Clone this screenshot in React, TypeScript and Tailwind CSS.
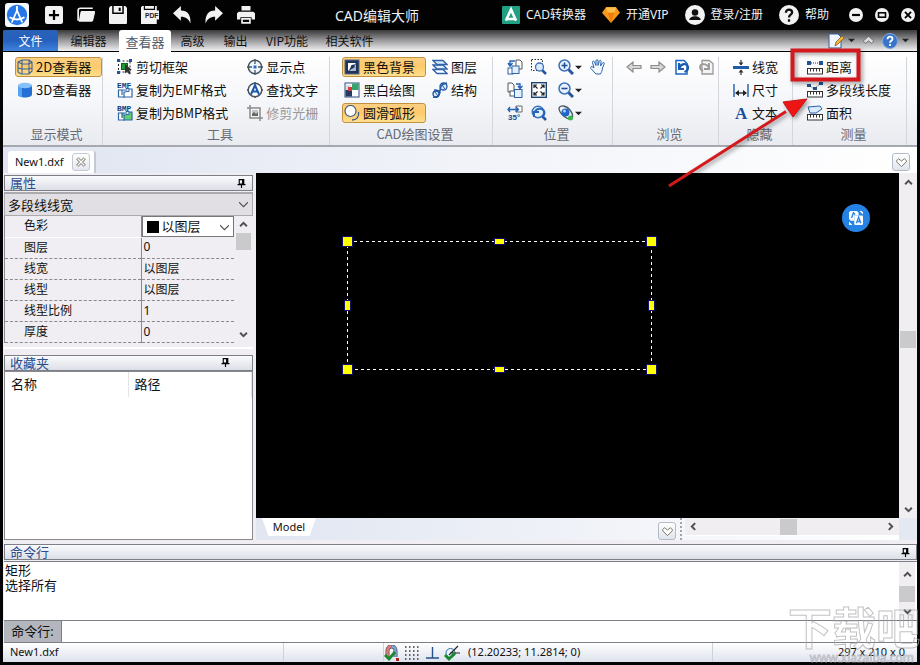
import type { ReactNode } from "react";

type IconProps = { children: ReactNode; className?: string };

function Icon({ children, className = "size-4" }: IconProps) {
    return (
        <svg viewBox="0 0 16 16" fill="none" className={`shrink-0 ${className}`} aria-hidden="true">
            {children}
        </svg>
    );
}

/* ---------- shared icon pieces ---------- */

function Ruler() {
    return (
        <>
            <rect x="0.5" y="9.5" width="15" height="5.5" fill="#fff" stroke="#333" />
            <path d="M3.5 10v2.5M6.5 10v2.5M9.5 10v2.5M12.5 10v2.5" stroke="#333" />
        </>
    );
}

function Lens({ sign }: { sign: ReactNode }) {
    return (
        <Icon>
            <path d="M10.5 10.5l4.5 4.5" stroke="#27549c" strokeWidth="3" />
            <circle cx="6.5" cy="6.5" r="5.5" fill="#e9f3ff" stroke="#3c72b8" strokeWidth="1.5" />
            {sign}
        </Icon>
    );
}

function PageStack({ label, fill }: { label: string; fill: string }) {
    return (
        <Icon>
            <path d="M5 8H1.500v7H8" fill="#fff" stroke="#3166a5" strokeWidth="1.200" />
            <path d="M5 13V8h3M12 7h3v8H7V10h2" fill={fill} stroke="#3166a5" strokeWidth="1.200" />
            <path d="M9 6.500h3v3H9z" fill="#dcebfc" stroke="#3166a5" />
            <text x="0" y="5.500" fontSize="8" fontWeight="700" fill="#173f7c" fontFamily="Liberation Mono">{label}</text>
        </Icon>
    );
}

function Chevron({ dir, className = "size-[9px]" }: { dir: "up" | "down" | "left" | "right"; className?: string }) {
    const paths = {
        up: "M2 11l6-6 6 6",
        down: "M2 5l6 6 6-6",
        left: "M11 2L5 8l6 6",
        right: "M5 2l6 6-6 6",
    };
    return (
        <Icon className={className}>
            <path d={paths[dir]} stroke="#505050" strokeWidth="3.5" />
        </Icon>
    );
}

function SelectArrow() {
    return (
        <Icon className="pointer-events-none absolute top-1.5 right-1 size-[9px]">
            <path d="M0 4l8 8 8-8" stroke="#505050" strokeWidth="2" />
        </Icon>
    );
}

function Caret() {
    return (
        <Icon className="size-[7px]">
            <path d="M0 4h16l-8 8z" fill="#222" />
        </Icon>
    );
}

const icons = {
    cube: (
        <Icon>
            <path d="M1 3l4-2h7l3 2v9l-3 3H4l-3-2zM1 3l4 2h7l3-2M5 5v10M12 1v14M5 1v4M1 9l4 1h7l3-1" stroke="#3d6596" strokeWidth="1.1" />
        </Icon>
    ),
    cylinder: (
        <Icon>
            <path d="M1 3.500v9c0 4 14 4 14 0v-9z" fill="#236fd4" />
            <path d="M1 3.500v9c0 1.600 2 2.400 4 2.800V5z" fill="#57a1f2" />
            <ellipse cx="8" cy="3.500" rx="7" ry="2.800" fill="#87c1fb" />
        </Icon>
    ),
    cutFrame: (
        <Icon>
            <rect x="1.500" y="2" width="11.500" height="11" stroke="#222" strokeDasharray="2 2" />
            <path d="M0 0h3v3H0zM12 0h3v3h-3zM0 12h3v3H0z" fill="#1c55a2" />
            <rect x="4.500" y="4.500" width="6" height="6" fill="#1d9a35" stroke="#0d6620" />
            <path d="M8 5l7 6-3 .3 2 3-2 1.200-1.600-3L8 14.500z" fill="#333" />
        </Icon>
    ),
    emf: <PageStack label="EMF" fill="#fff" />,
    bmp: <PageStack label="BMP" fill="#5fcf72" />,
    target: (
        <Icon>
            <circle cx="8" cy="8" r="6.700" fill="#f2f8ff" stroke="#46545f" strokeWidth="1.500" />
            <path d="M8 0v5M8 11v5M0 8h5M11 8h5" stroke="#46545f" strokeWidth="1.300" />
            <rect x="6.500" y="6.500" width="3" height="3" fill="#2c6ac4" />
        </Icon>
    ),
    findText: (
        <Icon>
            <circle cx="8" cy="8" r="6.800" fill="#fff" stroke="#46545f" strokeWidth="1.500" />
            <path d="M0 8h2M14 8h2M8 0v2M8 14v2" stroke="#46545f" strokeWidth="1.500" />
            <path d="M4 12.500L8 3l4 9.500M5.500 9.500h5" stroke="#1d58aa" strokeWidth="2" />
        </Icon>
    ),
    cropRaster: (
        <Icon>
            <path d="M3 0v13h13M0 3h13v13" stroke="#8a8a8a" strokeWidth="1.500" />
            <path d="M5 5h6v6H5z" fill="#c4c4c4" />
            <path d="M5 9l2-2 2 2 2-2v4H5z" fill="#666" />
        </Icon>
    ),
    blackBg: (
        <Icon>
            <rect x="1" y="1" width="14" height="14" fill="#20345a" stroke="#54698c" />
            <path d="M4 4h8l-8 8z" fill="#fff" />
            <path d="M12 5v7H5z" fill="#a9b8cc" />
            <path d="M10.500 5.500v3l-5 2.500 2-5z" fill="#20345a" />
        </Icon>
    ),
    monoDraw: (
        <Icon>
            <rect x="1" y="1" width="14" height="14" fill="#fff" stroke="#2f4f80" />
            <path d="M8 1.500h6.500V8H8z" fill="#35a46b" />
            <path d="M1.500 8H8v6.500H1.500z" fill="#253a61" />
            <path d="M2 3h5v5H2z" fill="#d6dde8" />
            <path d="M4 5h4v4H4z" fill="#db3a3a" />
        </Icon>
    ),
    smoothArc: (
        <Icon>
            <circle cx="6.500" cy="6" r="5.500" fill="#fff" stroke="#3f5d86" strokeWidth="1.200" />
            <path d="M14.500 7c1 5-2 8-6.500 8" stroke="#3f5d86" strokeWidth="1.300" />
        </Icon>
    ),
    layers: (
        <Icon>
            <path d="M1 10.500h10l4 4H5z" fill="#fff" stroke="#2f62a6" strokeWidth="1.400" />
            <path d="M1 6h10l4 4H5z" fill="#dcebfc" stroke="#2f62a6" strokeWidth="1.400" />
            <path d="M1 1.500h10l4 4H5z" fill="#dcebfc" stroke="#2f62a6" strokeWidth="1.400" />
        </Icon>
    ),
    structure: (
        <Icon>
            <circle cx="4" cy="12" r="3" fill="#dcebfc" stroke="#1f57a5" strokeWidth="1.300" />
            <circle cx="11.500" cy="4.500" r="3.500" fill="#dcebfc" stroke="#1f57a5" strokeWidth="1.300" />
            <path d="M1 15c5 1 7-2 7-6s1-7 7-8M2 8c3 0 6 1 6 3" stroke="#1f57a5" strokeWidth="1.500" />
            <path d="M3 10l3 4M10 3l3 4" stroke="#1f57a5" />
        </Icon>
    ),
    copyLeft: (
        <Icon>
            <path d="M9 1h4l2 2v7H9z" fill="#fff" stroke="#555" />
            <rect x="1" y="9" width="5" height="6" fill="#fff" stroke="#2f62a6" />
            <rect x="5" y="7" width="7" height="7.500" fill="#e3f0ff" stroke="#2f62a6" />
            <path d="M8 2H3v4M1 4l2 3 2.500-3" stroke="#2263b4" strokeWidth="1.400" />
        </Icon>
    ),
    copyRight: (
        <Icon>
            <path d="M1 1h4l2 2v7H1z" fill="#fff" stroke="#555" />
            <rect x="3" y="9" width="5" height="5" fill="#fff" stroke="#555" />
            <rect x="7.500" y="7.500" width="7.500" height="8" fill="#e3f0ff" stroke="#2f62a6" />
            <path d="M9 2h4v4M11 4l2 2.500L15.500 4" stroke="#2263b4" strokeWidth="1.400" />
        </Icon>
    ),
    rotate35: (
        <Icon>
            <path d="M9 1h6v6H9z" fill="#fff" stroke="#666" />
            <path d="M3 2L1 4.500 3 7M1 4.500h10M9 2l2.500 2.500L9 7" stroke="#2263b4" strokeWidth="1.300" />
            <text x="1" y="15" fontSize="8" fontWeight="700" fill="#1d4b8f" fontFamily="Liberation Sans">35°</text>
        </Icon>
    ),
    zoomWindow: (
        <Icon>
            <rect x="0.500" y="0.500" width="11" height="11" stroke="#222" strokeDasharray="1.500 1.500" />
            <path d="M11 11l4 4" stroke="#27549c" strokeWidth="2.500" />
            <circle cx="8.500" cy="8" r="4" fill="#d9ebff" stroke="#3c72b8" strokeWidth="1.300" />
        </Icon>
    ),
    fit: (
        <Icon>
            <rect x="0.700" y="0.700" width="14.600" height="14.600" fill="#fff" stroke="#1d4576" strokeWidth="1.400" />
            <path d="M3 6V3h3M10 3h3v3M13 10v3h-3M6 13H3v-3M3 3l3.500 3.500M13 3L9.500 6.500M13 13L9.500 9.500M3 13l3.500-3.500" stroke="#222" strokeWidth="1.200" />
        </Icon>
    ),
    zoomPrev: (
        <Icon>
            <path d="M11 11l4 4" stroke="#27549c" strokeWidth="2.500" />
            <circle cx="7" cy="7" r="5.800" fill="#e2f0ff" stroke="#3c72b8" strokeWidth="1.400" />
            <path d="M3 12V7h5M3.500 7.500C6 2 13 3 13.500 8c0 2-1 3-2 4" stroke="#2367be" strokeWidth="2" />
        </Icon>
    ),
    zoomIn: <Lens sign={<path d="M3.500 6.500h6M6.500 3.500v6" stroke="#1d4d91" strokeWidth="1.600" />} />,
    zoomOut: <Lens sign={<path d="M3.500 6.500h6" stroke="#1d4d91" strokeWidth="1.600" />} />,
    orbit: (
        <Icon>
            <path d="M1 3c1-3 7-3 11 2s3 9 0 9S1 9 1 3z" fill="#eef3f7" stroke="#4b5862" strokeWidth="1.300" />
            <circle cx="7.500" cy="7.500" r="4" fill="#1f66c8" />
            <circle cx="6.500" cy="6" r="1.500" fill="#a9d0ff" />
            <circle cx="12.500" cy="13" r="2.500" fill="#39b54a" />
        </Icon>
    ),
    hand: (
        <Icon>
            <path d="M5 14L1 9.500C-.2 8 1.500 6.800 2.800 8L4 9 2.500 3.500c-.3-1.600 1.500-2 2-.5L6 6.500V1.800c0-1.500 2-1.500 2 0V6.500l1.300-4.300c.4-1.400 2-1 1.800.4L10.500 7l2-3c.8-1.200 2.300-.4 1.700.9L12.500 9c-.3 3-1 4-2 6H6z" fill="#f4faff" stroke="#2b64ad" strokeWidth="1" />
        </Icon>
    ),
    back: (
        <Icon>
            <path d="M1 8l6-5v3.500h8v3H7V13z" fill="#d8d8d8" stroke="#8c8c8c" strokeWidth="1.200" />
        </Icon>
    ),
    forward: (
        <Icon>
            <path d="M15 8L9 3v3.500H1v3h8V13z" fill="#d8d8d8" stroke="#8c8c8c" strokeWidth="1.200" />
        </Icon>
    ),
    viewUndo: (
        <Icon>
            <path d="M2 1.500h8l3 3V15H2z" fill="#fff" stroke="#1c66c4" strokeWidth="1.500" />
            <path d="M5 4v6h5M5.500 9.500C6 5 13 3 14 8c.3 2-1 4-3.500 5" stroke="#1c5cb0" strokeWidth="2.200" />
        </Icon>
    ),
    viewRedo: (
        <Icon>
            <path d="M4 1.500h7l4 3V15H4z" fill="#f4f4f4" stroke="#999" strokeWidth="1.300" />
            <path d="M11 4v6H6M11 9C9 4 2 4 2 8c0 2 1 3 3 4" stroke="#999" strokeWidth="1.800" />
        </Icon>
    ),
    lineWeight: (
        <Icon>
            <path d="M0 7h16v3H0z" fill="#1f5da9" />
            <path d="M8 1v5M8 16v-5" stroke="#333" strokeWidth="1.200" />
            <path d="M5.500 3.500h5L8 6.500zM5.500 13.500h5L8 10.500z" fill="#333" />
        </Icon>
    ),
    dimension: (
        <Icon>
            <path d="M1 2v13M15 2v13" stroke="#1f5da9" strokeWidth="1.400" />
            <path d="M3 11h10" stroke="#222" strokeWidth="1.300" />
            <path d="M2 11l4-3v6zM14 11l-4-3v6z" fill="#222" />
        </Icon>
    ),
    text: (
        <Icon>
            <text x="2" y="14" fontSize="17" fontWeight="700" fill="#174f9c" fontFamily="Liberation Serif">A</text>
        </Icon>
    ),
    distance: (
        <Icon>
            <path d="M0 2h4v4H0zM12 2h4v4h-4z" fill="#1f5494" />
            <path d="M4 4h8" stroke="#333" strokeDasharray="1 1" />
            <Ruler />
        </Icon>
    ),
    polyLength: (
        <Icon>
            <path d="M0 2h4v3H0zM6 5h4v3H6zM12 0h4v3h-4z" fill="#1f5494" />
            <path d="M3 4l4 3 6-5" stroke="#333" strokeDasharray="1 1" />
            <Ruler />
        </Icon>
    ),
    area: (
        <Icon>
            <path d="M1 2l12-1 2 3-6 4H3z" fill="#d7eafe" stroke="#2f62a6" />
            <Ruler />
        </Icon>
    ),
};

/* ---------- ribbon ---------- */

type RibbonButtonProps = { icon: ReactNode; label: string; active?: boolean; disabled?: boolean };

function RibbonButton({ icon, label, active, disabled }: RibbonButtonProps) {
    return (
        <button
            disabled={disabled}
            className={`flex h-5 items-center gap-[3px] rounded-[3px] border px-px pr-2.5 text-[13px] leading-[18px] whitespace-nowrap ${
                active
                    ? "border-[#c2913f] bg-linear-to-b from-[#fbd083] via-[#fdca6a] to-[#ffdf8e]"
                    : "border-transparent"
            } ${disabled ? "text-[#989898]" : "text-[#111]"}`}
        >
            {icon}
            {label}
        </button>
    );
}

function IconButton({ icon, label, menu }: { icon: ReactNode; label: string; menu?: boolean }) {
    return (
        <button aria-label={label} className="flex h-5 items-center gap-px">
            {icon}
            {menu && <Caret />}
        </button>
    );
}

function RibbonGroup({ title, className, children }: { title: string; className: string; children: ReactNode }) {
    return (
        <section className={`flex shrink-0 flex-col border-r border-[#d3d6dc] pl-3 ${className}`}>
            <div className="flex h-[66px]">{children}</div>
            <h2 className="-ml-1 text-center text-[13px] leading-[22px] text-[#666b74]">{title}</h2>
        </section>
    );
}

function Column({ children }: { children: ReactNode }) {
    return <div className="flex flex-col gap-[3px]">{children}</div>;
}

function Ribbon() {
    return (
        <div className="flex shrink-0 overflow-hidden border-b-2 border-[#a5a8ae] bg-linear-to-b from-white via-[#f6f7fa] to-[#e9ebf0] pt-[5px] font-['Noto_Sans_CJK_SC',sans-serif]">
            <RibbonGroup title="显示模式" className="w-[100px]">
                <Column>
                    <RibbonButton icon={icons.cube} label="2D查看器" active />
                    <RibbonButton icon={icons.cylinder} label="3D查看器" />
                </Column>
            </RibbonGroup>
            <RibbonGroup title="工具" className="w-[227px]">
                <div className="flex gap-1.5">
                    <Column>
                        <RibbonButton icon={icons.cutFrame} label="剪切框架" />
                        <RibbonButton icon={icons.emf} label="复制为EMF格式" />
                        <RibbonButton icon={icons.bmp} label="复制为BMP格式" />
                    </Column>
                    <Column>
                        <RibbonButton icon={icons.target} label="显示点" />
                        <RibbonButton icon={icons.findText} label="查找文字" />
                        <RibbonButton icon={icons.cropRaster} label="修剪光栅" disabled />
                    </Column>
                </div>
            </RibbonGroup>
            <RibbonGroup title="CAD绘图设置" className="w-[163px]">
                <div className="flex gap-1">
                    <Column>
                        <RibbonButton icon={icons.blackBg} label="黑色背景" active />
                        <RibbonButton icon={icons.monoDraw} label="黑白绘图" />
                        <RibbonButton icon={icons.smoothArc} label="圆滑弧形" active />
                    </Column>
                    <Column>
                        <RibbonButton icon={icons.layers} label="图层" />
                        <RibbonButton icon={icons.structure} label="结构" />
                    </Column>
                </div>
            </RibbonGroup>
            <RibbonGroup title="位置" className="w-[120px]">
                <div className="grid auto-rows-[20px] grid-cols-[24px_27px_32px_16px] gap-y-[3px] pl-0.5">
                    <IconButton icon={icons.copyLeft} label="向左旋转" />
                    <IconButton icon={icons.zoomWindow} label="窗口缩放" />
                    <IconButton icon={icons.zoomIn} label="放大" menu />
                    <IconButton icon={icons.hand} label="平移" />
                    <IconButton icon={icons.copyRight} label="向右旋转" />
                    <IconButton icon={icons.fit} label="适合窗口" />
                    <IconButton icon={icons.zoomOut} label="缩小" menu />
                    <span />
                    <IconButton icon={icons.rotate35} label="旋转角度" />
                    <IconButton icon={icons.zoomPrev} label="上一个缩放" />
                    <IconButton icon={icons.orbit} label="视图" menu />
                </div>
            </RibbonGroup>
            <RibbonGroup title="浏览" className="w-[106px]">
                <div className="flex gap-2 pl-px">
                    <IconButton icon={icons.back} label="后退" />
                    <IconButton icon={icons.forward} label="前进" />
                    <IconButton icon={icons.viewUndo} label="撤消视图" />
                    <IconButton icon={icons.viewRedo} label="重做视图" />
                </div>
            </RibbonGroup>
            <RibbonGroup title="隐藏" className="w-[74px]">
                <Column>
                    <RibbonButton icon={icons.lineWeight} label="线宽" />
                    <RibbonButton icon={icons.dimension} label="尺寸" />
                    <RibbonButton icon={icons.text} label="文本" />
                </Column>
            </RibbonGroup>
            <RibbonGroup title="测量" className="w-[114px]">
                <Column>
                    <RibbonButton icon={icons.distance} label="距离" />
                    <RibbonButton icon={icons.polyLength} label="多段线长度" />
                    <RibbonButton icon={icons.area} label="面积" />
                </Column>
            </RibbonGroup>
        </div>
    );
}

/* ---------- title bar and tabs ---------- */

const quickActions = [
    {
        name: "新建",
        art: (
            <>
                <rect width="16" height="16" rx="2" fill="#f2f2f2" />
                <path d="M8 3.500v9M3.500 8h9" stroke="#000" strokeWidth="2" />
            </>
        ),
    },
    {
        name: "打开",
        art: (
            <>
                <path d="M1 13V4c0-1.500.5-2 2-2H14" stroke="#f2f2f2" strokeWidth="1.500" />
                <path d="M4.500 4.500H15c1 0 1.300.5 1 1.500L14.500 12.500c-.3 1-.8 1.500-1.500 1.500H1.500L3 6C3.200 5 3.500 4.500 4.500 4.500z" fill="#f2f2f2" />
            </>
        ),
    },
    {
        name: "保存",
        art: (
            <>
                <path d="M1.500 0h13L16 1.500V15a1 1 0 01-1 1H1a1 1 0 01-1-1V1.500z" fill="#f2f2f2" />
                <path d="M3.500 0v6.500h9V0" stroke="#000" strokeWidth="1.300" />
                <path d="M9.500 1.500v3" stroke="#000" strokeWidth="1.800" />
            </>
        ),
    },
    {
        name: "PDF",
        art: (
            <>
                <path d="M1 0h13v4h2v8h-2v4H0V1z" fill="#f2f2f2" />
                <path d="M3 0v3h9V0" stroke="#000" />
                <text x="3.500" y="10.500" fontSize="6" fontWeight="700" fill="#222" fontFamily="Liberation Sans">PDF</text>
            </>
        ),
    },
    { name: "撤消", art: <path d="M0 6.500L7 0v4c6 0 9 4 8.500 11.500C14 11.500 11.500 9.500 7 9.500V13z" fill="#f2f2f2" /> },
    { name: "重做", art: <path d="M16 6.500L9 0v4C3 4 0 8 .5 15.500 2 11.500 4.500 9.500 9 9.500V13z" fill="#f2f2f2" /> },
    {
        name: "打印",
        art: (
            <>
                <path d="M4 0h8v4H4zM1.500 5h13L16 6.500V12h-3v-2H3v2H0V6.500z" fill="#f2f2f2" />
                <path d="M4.500 11.500h7V15h-7z" stroke="#f2f2f2" strokeWidth="1.500" />
            </>
        ),
    },
];

function TitleBar() {
    return (
        <header className="flex h-[30px] shrink-0 items-center bg-[#020203] px-0.5 text-[12px] text-[#f0f0f0]">
            <Icon className="size-6">
                <rect width="16" height="16" rx="2" fill="#f4f8ff" />
                <circle cx="8" cy="8" r="6.800" fill="#2678e8" />
                <path d="M8 2v3M8 5l-3.500 8M8 5l3.500 8M3 9.500q5 3 10 0" stroke="#fff" strokeWidth="1.200" />
            </Icon>
            <div className="flex gap-3.5 pl-4">
                {quickActions.map((action) => (
                    <button key={action.name} aria-label={action.name}>
                        <Icon className="size-[18px]">{action.art}</Icon>
                    </button>
                ))}
            </div>
            <h1 className="ml-20 text-[14px] whitespace-nowrap">CAD编辑大师</h1>
            <nav className="ml-auto flex items-center whitespace-nowrap">
                <a href="#converter" className="flex items-center gap-1.5">
                    <Icon className="size-[18px]">
                        <rect width="16" height="16" rx="1" fill="#20a183" />
                        <path d="M3.500 13L8 3l4.500 10M5 11.500h6" stroke="#fff" strokeWidth="2.300" />
                    </Icon>
                    CAD转换器
                </a>
                <a href="#vip" className="ml-4 flex items-center gap-1.5">
                    <Icon className="size-[18px]">
                        <path d="M3.500 1h9L16 6l-8 9L0 6z" fill="#f79a1c" />
                        <path d="M3.500 1h9L11 6H5z" fill="#ffbf4a" />
                        <path d="M5 6h6l-3 9z" fill="#ed7d0c" />
                    </Icon>
                    开通VIP
                </a>
                <a href="#login" className="ml-4 flex items-center gap-1.5">
                    <Icon className="size-5">
                        <circle cx="8" cy="8" r="8" fill="#f2f2f2" />
                        <circle cx="8" cy="6" r="2.600" fill="#111" />
                        <path d="M3.500 12c0-4 9-4 9 0z" fill="#111" />
                    </Icon>
                    登录/注册
                </a>
                <a href="#help" className="ml-4 flex items-center gap-1.5">
                    <Icon className="size-5">
                        <circle cx="8" cy="8" r="8" fill="#f2f2f2" />
                        <path d="M5.500 6.200c0-3.500 5-3.200 5-.3 0 1.800-2.500 2-2.500 4M8 11.300v2" stroke="#111" strokeWidth="1.800" />
                    </Icon>
                    帮助
                </a>
                <div className="ml-5 flex gap-3">
                    <button aria-label="最小化">
                        <Icon className="size-3.5">
                            <circle cx="8" cy="8" r="8" fill="#f2f2f2" />
                            <path d="M3.500 8h9" stroke="#000" strokeWidth="2.500" />
                        </Icon>
                    </button>
                    <button aria-label="最大化">
                        <Icon className="size-3.5">
                            <circle cx="8" cy="8" r="8" fill="#f2f2f2" />
                            <rect x="4" y="5.500" width="8" height="5" stroke="#000" strokeWidth="1.800" />
                        </Icon>
                    </button>
                    <button aria-label="关闭">
                        <Icon className="size-3.5">
                            <circle cx="8" cy="8" r="8" fill="#f2f2f2" />
                            <path d="M4.500 4.500l7 7M11.500 4.500l-7 7" stroke="#000" strokeWidth="2.200" />
                        </Icon>
                    </button>
                </div>
            </nav>
        </header>
    );
}

function RibbonTabs() {
    return (
        <nav className="flex h-[22px] shrink-0 items-stretch border-b border-black bg-linear-to-b from-[#3a3a3c] via-[#9c9c9e] to-[#f2f2f4] font-['Noto_Sans_CJK_SC',sans-serif] text-[12px] leading-[21px] whitespace-nowrap text-[#111]">
            <button className="w-[55px] rounded-t-[3px] bg-linear-to-b from-[#2a62b8] via-[#2560bd] to-[#3f83dd] text-white">文件</button>
            <button className="w-[61px]">编辑器</button>
            <button className="-mb-px w-[52px] rounded-t-[3px] bg-white text-[13px] text-[#56606e]">查看器</button>
            <button className="w-[43px]">高级</button>
            <button className="w-[43px]">输出</button>
            <button className="w-[60px]">VIP功能</button>
            <button className="w-[65px]">相关软件</button>
            <div className="ml-auto flex items-center gap-0.5 pr-2">
                <button aria-label="样式" className="flex items-center gap-1">
                    <Icon>
                        <path d="M1 1h9l3 3v11H1z" fill="#f2f8ff" stroke="#345f95" />
                        <path d="M7 13l1-4 6-6 2 2-6 6z" fill="#f2b83d" stroke="#8c5a14" strokeWidth="0.800" />
                    </Icon>
                    <Caret />
                </button>
                <button aria-label="折叠功能区" className="px-1.5">
                    <Icon className="size-[11px]">
                        <path d="M1 8l7-6 7 6v2l-3 2-4-3.500L4 12l-3-2z" fill="#ddd" stroke="#666" strokeWidth="1.200" />
                    </Icon>
                </button>
                <button aria-label="关于" className="flex items-center gap-1">
                    <Icon>
                        <circle cx="8" cy="8" r="7.500" fill="#3974c8" stroke="#7ea9e2" />
                        <path d="M5.500 6.200c0-3.500 5-3.200 5-.3 0 1.800-2.500 2-2.500 3.800M8 11v2" stroke="#fff" strokeWidth="1.800" />
                    </Icon>
                    <Caret />
                </button>
            </div>
        </nav>
    );
}

function HeartButton() {
    return (
        <button aria-label="标签列表" className="flex size-[18px] items-center justify-center rounded-[3px] border border-[#b3bbc9] bg-linear-to-b from-white to-[#dfe4ec]">
            <Icon className="size-[11px]">
                <path d="M1 5l3-2.500L8 6l4-3.500L15 5v2l-7 7-7-7z" fill="#fff" stroke="#6b6a55" strokeWidth="1.300" />
            </Icon>
        </button>
    );
}

function DocumentTabs() {
    return (
        <div className="flex h-[26px] shrink-0 items-end justify-between bg-linear-to-r from-[#dfe4f0] via-[#f1f3f9] to-white pr-[7px] pl-[5px]">
            <div className="flex h-[22px] items-center gap-2 rounded-t-[3px] border-r-2 border-[#c3c9d6] bg-white pr-1 pl-[7px] text-[11px]">
                New1.dxf
                <button aria-label="关闭标签" className="flex size-[18px] items-center justify-center rounded-[3px] border border-[#c3c9d3] bg-linear-to-b from-white to-[#e4e7ee]">
                    <Icon className="size-[10px]">
                        <path d="M2 2l12 12M14 2L2 14" stroke="#77756a" strokeWidth="5" />
                        <path d="M2.500 2.500l11 11M13.500 2.500l-11 11" stroke="#fff" strokeWidth="2.200" />
                    </Icon>
                </button>
            </div>
            <div className="pb-0.5">
                <HeartButton />
            </div>
        </div>
    );
}

/* ---------- side panels ---------- */

function PanelHeader({ title, className = "pr-1.5" }: { title: string; className?: string }) {
    return (
        <div className={`flex h-4 shrink-0 items-center justify-between border border-[#7d7f86] bg-linear-to-b from-[#fbfbfd] to-[#dcdfe7] pl-[5px] ${className}`}>
            <h2 className="text-[13px] leading-[14px] text-[#2b4d8e]">{title}</h2>
            <button aria-label={`固定${title}`}>
                <Icon className="size-[9px]">
                    <path d="M4 1h8v8H4zM10 1v8M1 10h14M8 10v6" stroke="#000" strokeWidth="2" />
                </Icon>
            </button>
        </div>
    );
}

const properties = [
    ["图层", "0"],
    ["线宽", "以图层"],
    ["线型", "以图层"],
    ["线型比例", "1"],
    ["厚度", "0"],
];

function SidePanels() {
    return (
        <aside className="flex w-[253px] shrink-0 flex-col bg-[#f0eef2] pt-0.5 pr-[3px] pl-px">
            <PanelHeader title="属性" />
            <div className="relative mt-px border border-t-2 border-[#a9a9ae]">
                <select aria-label="对象类型" className="block h-[21px] w-full appearance-none bg-[#e1dfe3] pl-[3px] text-[13px] leading-5">
                    <option>多段线线宽</option>
                </select>
                <SelectArrow />
            </div>
            <div className="flex border-l border-[#8a8a8e]">
                <table className="grow table-fixed text-[12px] leading-5">
                    <tbody>
                        <tr className="h-[21px]">
                            <th scope="row" className="w-[136px] border-r border-b border-r-[#8a8a8e] border-b-white pl-[19px] text-left font-normal">色彩</th>
                            <td>
                                <div className="relative flex h-[21px] items-center gap-[3px] border border-[#77777b] bg-white pl-1 text-[13px]">
                                    <span className="size-3 bg-black" />
                                    <select aria-label="色彩" className="h-[19px] grow appearance-none leading-[19px]">
                                        <option>以图层</option>
                                    </select>
                                    <SelectArrow />
                                </div>
                            </td>
                        </tr>
                        {properties.map(([name, value]) => (
                            <tr key={name} className="h-[21px]">
                                <th scope="row" className="border-r border-b border-[#8a8a8e] pl-[19px] text-left font-normal [border-bottom-style:dashed]">{name}</th>
                                <td className="border-b border-dashed border-[#8a8a8e] pl-0.5">{value}</td>
                            </tr>
                        ))}
                    </tbody>
                </table>
                <div className="flex w-[19px] shrink-0 flex-col items-center">
                    <span className="flex h-[17px] items-center"><Chevron dir="up" /></span>
                    <span className="h-[17px] w-[15px] bg-[#cac9cc]" />
                    <span className="mt-auto flex h-[17px] items-center"><Chevron dir="down" /></span>
                </div>
            </div>
            <div className="mt-1 mb-1.5 h-0.5 shrink-0 bg-white" />
            <PanelHeader title="收藏夹" className="pr-[22px]" />
            <div className="grow border border-[#8a8a8e] bg-white">
                <table className="w-full text-[13px] leading-[25px]">
                    <thead>
                        <tr className="text-left">
                            <th className="w-[123px] border-r border-[#e4e4e8] pl-1.5 font-normal">名称</th>
                            <th className="border-r border-[#e4e4e8] pl-1.5 font-normal">路径</th>
                        </tr>
                    </thead>
                </table>
            </div>
        </aside>
    );
}

/* ---------- drawing area ---------- */

const grips = [
    { x: 91, y: 68, w: 9, h: 9 },
    { x: 395, y: 68, w: 9, h: 9 },
    { x: 91, y: 196, w: 9, h: 9 },
    { x: 395, y: 196, w: 9, h: 9 },
    { x: 243, y: 68, w: 9, h: 5 },
    { x: 243, y: 196, w: 9, h: 5 },
    { x: 91, y: 132, w: 5, h: 9 },
    { x: 395, y: 132, w: 5, h: 9 },
];

function DrawingArea() {
    return (
        <main className="flex min-w-0 grow flex-col">
            <div className="flex min-h-0 grow">
                <div className="relative min-w-0 grow overflow-hidden bg-black">
                    <svg className="absolute top-0 left-0 h-[220px] w-[420px]" viewBox="0 0 420 220" shapeRendering="crispEdges">
                        <rect x="91.500" y="68.500" width="304" height="128" fill="none" stroke="#fff" strokeDasharray="3 3" />
                        {grips.map((g) => (
                            <rect
                                key={`${g.x}-${g.y}`}
                                x={g.x + 0.5 - g.w / 2}
                                y={g.y + 0.5 - g.h / 2}
                                width={g.w}
                                height={g.h}
                                fill="#ffff00"
                                stroke="#10106a"
                                strokeWidth="2"
                                paintOrder="stroke"
                            />
                        ))}
                    </svg>
                    <button aria-label="翻译" className="absolute top-[31px] right-[29px] flex size-7 items-center justify-center rounded-full bg-[#2583e6]">
                        <Icon className="size-3.5">
                            <path d="M1.500 0H9l2 2v3H6v6H2L0 9V1.500zM12 0l4 4V1.500L14.500 0zM0 12v4h4z" fill="#fff" />
                            <rect x="6" y="5" width="10" height="11" rx="1.500" fill="#fff" />
                            <path d="M8.500 14L11 7l2.500 7M9.500 12h3M3 8l2-6 2 2" stroke="#2583e6" strokeWidth="1.500" />
                        </Icon>
                    </button>
                </div>
                <div className="flex w-[18px] shrink-0 flex-col items-center bg-[#f0eef1]">
                    <span className="flex h-[18px] items-center"><Chevron dir="up" /></span>
                    <span className="grow-12" />
                    <span className="h-[17px] w-4 bg-[#cac9cc]" />
                    <span className="grow-13" />
                    <span className="flex h-[18px] items-center"><Chevron dir="down" /></span>
                </div>
            </div>
            <div className="flex h-[22px] shrink-0 bg-linear-to-r from-[#e1e6f1] to-white">
                <div className="flex grow items-end justify-between pl-1.5">
                    <button className="h-full w-[54px] pb-1">
                        <span className="block h-[18px] bg-white text-[11px] leading-[17px] [clip-path:polygon(0_0,100%_0,88%_100%,12%_100%)]">Model</span>
                    </button>
                    <HeartButton />
                </div>
                <div className="mr-[3px] ml-1 border-l-2 border-dotted border-[#a0a4ad]" />
                <div className="mb-1 flex w-[214px] items-center border-b border-white bg-[#f0eef1] px-1">
                    <Chevron dir="left" />
                    <span className="grow-12" />
                    <span className="h-4 w-[17px] bg-[#cac9cc]" />
                    <span className="grow-13" />
                    <Chevron dir="right" />
                </div>
                <div className="w-[18px] bg-[#e4e8f1]" />
            </div>
        </main>
    );
}

/* ---------- command line and status ---------- */

function CommandLine() {
    return (
        <section className="shrink-0 bg-[#f0eef2] pt-1 pl-px">
            <PanelHeader title="命令行" />
            <div className="mt-px flex h-[60px] border-y border-[#7d7f86] bg-white">
                <p className="grow pt-px pl-px text-[13px] leading-[15px]">
                    矩形
                    <br />
                    选择所有
                </p>
                <div className="mr-0.5 flex w-4 flex-col items-center bg-[#f0eef1]">
                    <span className="flex h-6 items-center"><Chevron dir="up" /></span>
                    <span className="h-4 w-full bg-[#cac9cc]" />
                    <span className="flex grow items-center"><Chevron dir="down" /></span>
                </div>
            </div>
            <div className="flex h-[22px] border-b border-[#7d7f86] bg-white">
                <label htmlFor="command" className="w-[58px] border-r border-[#7d7f86] bg-[#b3b6bd] text-center text-[13px] leading-5">
                    命令行:
                </label>
                <input id="command" className="min-w-0 grow outline-none" />
            </div>
        </section>
    );
}

function StatusBar() {
    return (
        <footer className="flex h-[19px] shrink-0 items-stretch bg-linear-to-b from-white to-[#dde2ec] text-[11px] leading-[18px] whitespace-nowrap">
            <span className="w-[281px] border-r border-[#cdd2dd] pl-[7px]">New1.dxf</span>
            <span className="w-[100px] border-r border-[#cdd2dd]" />
            <div className="flex items-center gap-1">
                <button aria-label="对象捕捉">
                    <Icon>
                        <path d="M3.500 12V5.500c0-5.500 8-5.500 8 0V12" stroke="#555" strokeWidth="4" />
                        <path d="M3.500 12V5.500C3.500 3 5 1.500 7.500 1.500" stroke="#e07a7a" strokeWidth="2.500" />
                        <path d="M7.500 1.500c3 0 4 1.500 4 4V12" stroke="#7fa3dd" strokeWidth="2.500" />
                        <path d="M1 10l4 4 6-7" stroke="#168a2a" strokeWidth="2.800" />
                        <path d="M12 13h3v3h-3z" fill="#b01e1e" />
                    </Icon>
                </button>
                <button aria-label="栅格">
                    <Icon>
                        <path d="M1 2h14M1 6h14M1 10h14M1 14h14" stroke="#333" strokeWidth="1.500" strokeDasharray="1.500 2.500" />
                    </Icon>
                </button>
                <button aria-label="正交">
                    <Icon>
                        <path d="M2 13h13M8.500 2v11" stroke="#24508c" strokeWidth="1.400" />
                    </Icon>
                </button>
                <button aria-label="极轴">
                    <Icon>
                        <circle cx="6.500" cy="8" r="4.500" fill="#e7f5ff" stroke="#356ba9" />
                        <path d="M5 10L14 1M6 8h10" stroke="#222" strokeWidth="1.200" />
                        <path d="M1 10l4 4 6-6" stroke="#168a2a" strokeWidth="2.800" />
                    </Icon>
                </button>
            </div>
            <span className="w-[253px] border-r border-[#cdd2dd] pl-2">(12.20233; 11.2814; 0)</span>
            <span className="ml-auto pr-3">297 x 210 x 0</span>
        </footer>
    );
}

function Watermark() {
    return (
        <div className="pointer-events-none absolute right-0 bottom-0 flex flex-col items-end whitespace-nowrap text-transparent opacity-70">
            <span className="text-[44px] leading-[46px] font-bold [-webkit-text-stroke:1px_#a9a9ae]">下载吧</span>
            <span className="pr-1.5 text-[12px] leading-[14px] [-webkit-text-stroke:1px_#b4b4ba]">www.xiazaiba.com</span>
        </div>
    );
}

function Callout() {
    return (
        <svg className="pointer-events-none absolute top-10 left-[660px] h-[160px] w-[210px] drop-shadow-[2px_2px_2px_rgba(0,0,0,0.4)]" viewBox="0 0 210 160">
            <rect x="132.500" y="10.500" width="66" height="29" fill="none" stroke="#d3191c" strokeWidth="4" />
            <path d="M9 146L126 71.500" stroke="#d3191c" strokeWidth="3" />
            <path d="M147 59l-14 18-10-15z" fill="#ee1515" stroke="#c4171a" />
        </svg>
    );
}

export default function App() {
    return (
        <div className="relative flex h-screen min-h-[560px] w-full flex-col overflow-hidden bg-[#040407] px-[3px] pb-[3px] font-['Noto_Sans','Noto_Sans_CJK_SC',sans-serif] text-[#111]">
            <TitleBar />
            <RibbonTabs />
            <Ribbon />
            <DocumentTabs />
            <div className="flex min-h-0 grow">
                <SidePanels />
                <DrawingArea />
            </div>
            <CommandLine />
            <StatusBar />
            <Callout />
            <Watermark />
        </div>
    );
}
